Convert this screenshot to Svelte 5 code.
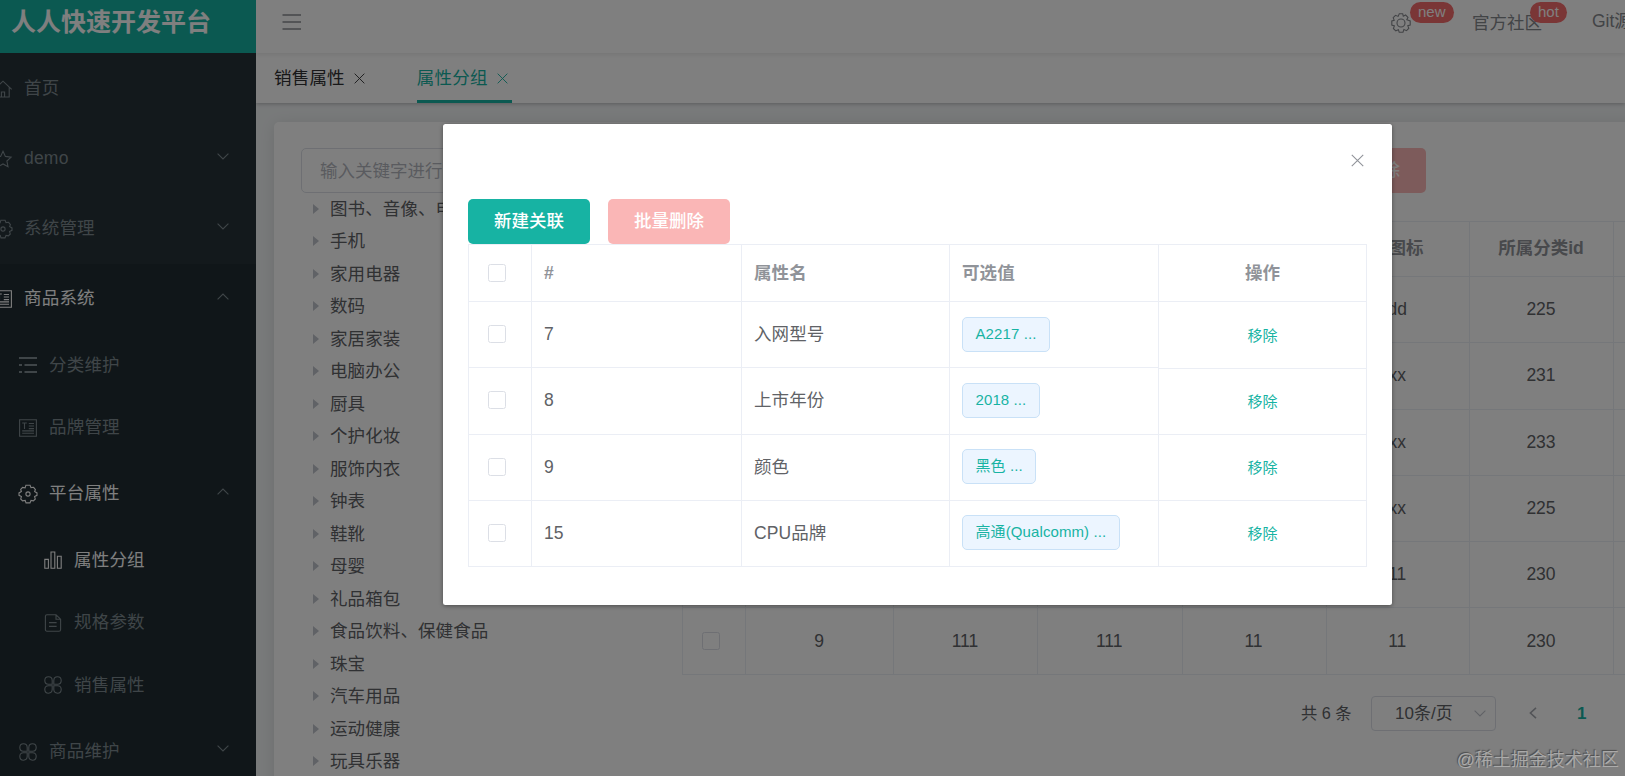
<script>
  const menu = [
    { text: '首页', icon: 'home', level: 0 },
    { text: 'demo', icon: 'star', level: 0, arrow: 'down' },
    { text: '系统管理', icon: 'gear', level: 0, arrow: 'down' },
    { text: '商品系统', icon: 'news', level: 0, arrow: 'up', active: true },
    { text: '分类维护', icon: 'list', level: 1, small: true },
    { text: '品牌管理', icon: 'news', level: 1, small: true },
    { text: '平台属性', icon: 'gear', level: 1, arrow: 'up', active: true },
    { text: '属性分组', icon: 'bars', level: 2, small: true, active: true },
    { text: '规格参数', icon: 'doc', level: 2, small: true },
    { text: '销售属性', icon: 'clover', level: 2, small: true },
    { text: '商品维护', icon: 'clover', level: 1, arrow: 'down' }
  ];
  const tree = ['图书、音像、电子书刊', '手机', '家用电器', '数码', '家居家装', '电脑办公', '厨具', '个护化妆', '服饰内衣', '钟表', '鞋靴', '母婴', '礼品箱包', '食品饮料、保健食品', '珠宝', '汽车用品', '运动健康', '玩具乐器'];
  const groups = [
    ['', '', '', '', 'dd', '225', ''],
    ['', '', '', '', 'xx', '231', ''],
    ['', '', '', '', 'xx', '233', ''],
    ['', '', '', '', 'xx', '225', ''],
    ['', '', '', '', '11', '230', ''],
    ['9', '111', '111', '11', '11', '230', '']
  ];
  const attrs = [
    { id: 7, name: '入网型号', value: 'A2217 ...' },
    { id: 8, name: '上市年份', value: '2018 ...' },
    { id: 9, name: '颜色', value: '黑色 ...' },
    { id: 15, name: 'CPU品牌', value: '高通(Qualcomm) ...' }
  ];
</script>

{#snippet icon(name)}
  <svg class="icon" viewBox="0 0 18 18" fill="none" stroke="currentColor" stroke-width="1.1">
    {#if name === 'home'}
      <path d="M.3 9.4 9 1.2 17.7 9.4M2.8 7.2V17H15.2V7.2M7.4 17V12H10.6V17" />
    {:else if name === 'star'}
      <path d="M9 1.2 11.4 6.4 17.1 7.1 12.9 11 14 16.7 9 13.9 4 16.7 5.1 11 .9 7.1 6.6 6.4Z" />
    {:else if name === 'gear'}
      <path d="M6.9.2H11.1L12 2.6 14.6 2.3 16.4 4.6 15.6 6.6 18 7.9V10.3L15.6 11.6 16.3 14 14.4 15.9 12 15.4 11 17.9H7L6.2 15.4 3.6 15.9 1.7 14 2.4 11.6 0 10.3V7.9L2.4 6.6 1.7 4.4 3.6 2.4 6.1 2.8Z" />
      <circle cx="9" cy="9" r="2.1" />
    {:else if name === 'news'}
      <path d="M.6.8H17.4V17.2H.6ZM3.2 4H7.8M5.5 4V10M9.8 4.5H15M9.8 7H15M9.8 9.6H15M3.2 11.9H15M3.2 14.2H15" />
    {:else if name === 'list'}
      <path stroke-width="2.2" d="M0 2H18M5.5 9H18M5.5 16H18M0 9H3M0 16H3" />
    {:else if name === 'bars'}
      <path d="M.8 8.4H4.4V17.2H.8ZM7 1H10.8V17.2H7ZM13.4 5.2H17.2V17.2H13.4Z" />
    {:else if name === 'doc'}
      <path d="M3 .8H12L16.6 5.2V15.4Q16.6 17.2 15 17.2H3Q1.4 17.2 1.4 15.4V2.6Q1.4.8 3 .8ZM12 .8V5.2H16.6M5 8.6H12.6M5 12.4H12.6" />
    {:else if name === 'clover'}
      <path d="M8.2 8.2H4.4A3.7 3.7 0 1 1 8.2 4.4ZM9.8 8.2V4.4A3.7 3.7 0 1 1 13.6 8.2ZM8.2 9.8V13.6A3.7 3.7 0 1 1 4.4 9.8ZM9.8 9.8H13.6A3.7 3.7 0 1 1 9.8 13.6Z" />
    {/if}
  </svg>
{/snippet}

{#snippet cross()}
  <svg class="cross" viewBox="0 0 12 12" fill="none" stroke="currentColor" stroke-width="1"><path d="M.7.7 11.3 11.3M11.3.7.7 11.3" /></svg>
{/snippet}

{#snippet chevron(up)}
  <svg class="chevron" class:up viewBox="0 0 12 7" fill="none" stroke="currentColor" stroke-width="1.1"><path d="M.6.7 6 6 11.4.7" /></svg>
{/snippet}

<div class="page">
  <aside>
    <h1>人人快速开发平台</h1>
    <nav>
      {#each menu as item}
        <div class="item level{item.level}" class:small={item.small} class:active={item.active}>
          {@render icon(item.icon)}
          <span>{item.text}</span>
          {#if item.arrow}<i>{@render chevron(item.arrow === 'up')}</i>{/if}
        </div>
      {/each}
    </nav>
  </aside>

  <main>
    <header>
      <svg class="burger" viewBox="0 0 20 16" fill="none" stroke="currentColor" stroke-width="1.3"><path d="M.5 1H19M.5 8H19M.5 15H19" /></svg>
      <div class="links">
        <span class="setting">
          <svg viewBox="0 0 20 20" fill="none" stroke="currentColor" stroke-width="1.1">
            <path d="M8.3.8H11.7L12.3 3.2 14.6 2 17 4.3 15.8 6.8 19.2 8V12L16.8 12.7 17.8 15.3 15.5 17.7 12.9 16.6 12 19.2H8.2L7.4 16.8 4.8 17.8 2.4 15.5 3.4 12.9.8 12V8L3.2 7.3 2.2 4.7 4.5 2.3 7.1 3.4Z" />
            <circle cx="10" cy="10" r="4" />
          </svg>
          <b class="badge new">new</b>
        </span>
        <span class="community">官方社区<b class="badge hot">hot</b></span>
        <span class="git">Git源码</span>
      </div>
    </header>
    <div class="tabs">
      <div class="tab">销售属性{@render cross()}</div>
      <div class="tab current">属性分组{@render cross()}</div>
    </div>

    <section class="card">
      <div class="tree">
        <div class="filter">输入关键字进行过滤</div>
        {#each tree as node}
          <div class="node"><i></i>{node}</div>
        {/each}
      </div>
      <div class="groups">
        <div class="form"><button class="danger">批量删除</button></div>
        <div class="grid back">
          <div class="row head">
            <div class="check"><i></i></div>
            {#each ['分组id', '组名', '排序', '描述', '组图标', '所属分类id', ''] as title}<div>{title}</div>{/each}
          </div>
          {#each groups as cells}
            <div class="row">
              <div class="check"><i></i></div>
              {#each cells as cell}<div>{cell}</div>{/each}
            </div>
          {/each}
        </div>
        <div class="pager">
          <span>共 6 条</span>
          <div class="select">10条/页{@render chevron(false)}</div>
          <svg class="prev" viewBox="0 0 8 12" fill="none" stroke="currentColor" stroke-width="1.6"><path d="M7 .8 1.4 6 7 11.2" /></svg>
          <b>1</b>
        </div>
      </div>
    </section>
  </main>

  <div class="mask">
    <div class="dialog">
      <div class="close">{@render cross()}</div>
      <div class="buttons">
        <button class="primary">新建关联</button>
        <button class="danger">批量删除</button>
      </div>
      <div class="grid front">
        <div class="row head">
          <div class="check"><i></i></div>
          <div>#</div>
          <div>属性名</div>
          <div>可选值</div>
          <div class="action">操作</div>
        </div>
        {#each attrs as attr}
          <div class="row">
            <div class="check"><i></i></div>
            <div>{attr.id}</div>
            <div>{attr.name}</div>
            <div class="value"><span class="tag">{attr.value}</span></div>
            <div class="action"><a>移除</a></div>
          </div>
        {/each}
      </div>
    </div>
  </div>
  <div class="watermark">@稀土掘金技术社区</div>
</div>

<style>
  :global(body) { margin: 0; overflow: hidden; }
  .page, .page * { box-sizing: border-box; }
  .page {
    position: relative; display: flex; width: 1625px; height: 776px; overflow: hidden;
    font: 17.5px/1.15 "Liberation Sans", "Noto Sans CJK SC", sans-serif; color: #606266; background: #f1f4f5;
  }
  svg { flex: none; overflow: visible; }
  i { font-style: normal; flex: none; }

  aside { width: 256px; flex: none; background: #263238; overflow: hidden; }
  h1 { height: 53px; margin: 0 0 1px; padding-left: 11px; line-height: 45px; font-size: 25px; font-weight: 700; color: #fff; background: #17b3a3; white-space: nowrap; }
  .item { display: flex; align-items: center; height: 70px; padding-right: 27px; color: #7f8b91; }
  .item.small { height: 62.5px; }
  .item span { margin-left: 12px; flex: 1; padding-bottom: 1px; letter-spacing: .2px; }
  .item.active { color: #fff; }
  .item i { color: #7f8b91; margin-top: -6px; }
  .level0 .icon { margin-left: -6px; }
  .level0.active, .level1, .level2 { background: #202d32; }
  .level1 { padding-left: 19px; }
  .level2 { padding-left: 44px; }
  .icon { width: 18px; height: 18px; }
  .chevron { display: block; width: 12px; height: 7px; }
  .chevron.up { transform: rotate(180deg); }
  .cross { width: 11px; height: 11px; }

  main { flex: 1; min-width: 0; overflow: hidden; }
  header { display: flex; height: 53px; padding-left: 26px; background: #fff; color: #8a8d92; box-shadow: 0 2px 4px rgba(0, 0, 0, .08); position: relative; }
  .burger { width: 20px; height: 16px; margin-top: 14px; }
  .links { display: flex; margin-left: 1089px; white-space: nowrap; line-height: 20px; color: #85888d; }
  .setting { position: relative; width: 20px; height: 20px; margin-top: 13px; }
  .setting svg { display: block; width: 20px; height: 20px; }
  .community { position: relative; margin: 13px 0 0 61px; width: 70px; height: 20px; }
  .git { margin: 11px 0 0 50px; }
  .badge { position: absolute; top: -11px; height: 21px; padding: 0 8px; border-radius: 11px; background: #f56c6c; color: #fff; font-size: 15px; font-weight: 400; line-height: 20px; }
  .new { left: 19px; }
  .hot { left: 58px; }

  .tabs { display: flex; height: 50px; padding-left: 18px; gap: 47.5px; background: #fff; box-shadow: 0 1px 4px rgba(0, 0, 0, .25); color: #303133; }
  .tab { display: flex; align-items: center; gap: 9.5px; padding-right: 4px; height: 50px; letter-spacing: .2px; border-bottom: 3px solid transparent; border-top: 3px solid transparent; }
  .current { color: #17b3a3; border-bottom-color: #17b3a3; }

  .card { display: flex; width: 1540px; height: 800px; margin: 19px 0 0 18px; padding: 26px 27px; background: #fff; border-radius: 5px; box-shadow: 0 2px 15px rgba(0, 0, 0, .1); }
  .tree { width: 381px; flex: none; white-space: nowrap; }
  .filter { width: 356px; height: 45px; padding-left: 18px; line-height: 44px; border: 1px solid #dcdfe6; border-radius: 5px; color: #b4b7be; overflow: hidden; }
  .node { display: flex; align-items: center; height: 32.5px; padding: 0 0 1px 12px; letter-spacing: .1px; }
  .node i { margin-right: 11px; border: 5px solid transparent; border-left: 6px solid #c0c4cc; border-right: 0; }

  .groups { flex: 1; }
  .form { display: flex; padding-left: 622px; margin-bottom: 28px; }
  button { width: 122px; height: 45px; padding: 0; border: 0; border-radius: 5px; color: #fff; font: 500 17.5px/45px "Liberation Sans", "Noto Sans CJK SC", sans-serif; }
  .primary { background: #17b3a3; }
  .danger { background: #fab6b6; }

  .grid { border: 1px solid #ebeef5; border-right: 0; border-bottom: 0; }
  .row { display: grid; height: 66.3px; }
  .row > div { display: flex; align-items: center; border: 0 solid #ebeef5; border-width: 0 1px 1px 0; }
  .head { font-weight: 700; color: #909399; }
  .check i { width: 18px; height: 18px; border: 1px solid #dcdfe6; border-radius: 2.5px; background: #fff; }
  .row > .check { justify-content: center; padding-right: 6px; }
  .back { width: 1100px; }
  .back .row { grid-template-columns: 63px 148px 144px 144.5px 144px 143.5px 144px 1fr; }
  .back .row > div { justify-content: center; }
  .back .row > div:not(.check) { padding-right: 1px; padding-bottom: 1px; }
  .back .head { height: 55px; }
  .pager { display: flex; align-items: center; height: 35px; margin-top: 21px; padding-left: 619px; font-size: 16.25px; }
  .pager span { width: 70px; }
  .select { display: flex; align-items: center; justify-content: space-between; width: 125px; height: 35px; padding: 0 9px 0 23px; border: 1px solid #dcdfe6; border-radius: 4px; font-size: 17px; }
  .select .chevron { color: #c0c4cc; }
  .prev { width: 8px; height: 12px; margin-left: 33px; color: #a5a8af; }
  .pager b { margin-left: 40px; color: #17b3a3; font-size: 17px; }

  .mask { position: absolute; inset: 0; padding: 124px 0 0 443px; background: rgba(0, 0, 0, .5); }
  .dialog { width: 949px; height: 481px; padding: 30px 25px 0; background: #fff; border-radius: 2.5px; box-shadow: 0 1px 4px rgba(0, 0, 0, .4); }
  .close { display: flex; justify-content: flex-end; height: 45px; padding-right: 3px; color: #909399; }
  .close .cross { width: 13px; height: 13px; }
  .buttons { display: flex; gap: 18px; }
  .front { width: 899px; }
  .front .row { grid-template-columns: 63px 210px 208px 209px 208px; height: 66.25px; }
  .front .row > div:not(.check) { padding: 0 0 1px 12px; letter-spacing: .1px; }
  .front .row > .value { padding: 0 0 0 13px; letter-spacing: 0; }
  .front .row > .check { padding-bottom: 1px; }
  .front .head { height: 57px; }
  .front .head > div:not(.check) { padding-top: 2px; }
  .front .row > div.action:not(.check) { justify-content: center; padding-left: 0; }
  .front .head + .row .action { margin-bottom: -1px; }
  .action a { font-size: 15px; color: #17b3a3; padding-top: 2px; }
  .tag { height: 35px; padding: 0 12.5px; border: 1px solid #c9e1f7; border-radius: 5px; background: #ecf5ff; color: #17b3a3; font-size: 15px; line-height: 31px; white-space: nowrap; }

  .watermark { position: absolute; right: 6px; bottom: 5px; font-size: 18px; line-height: 22px; color: rgba(190, 190, 190, .75); text-shadow: -1px -1px 1px rgba(40, 40, 40, .6); }
</style>
